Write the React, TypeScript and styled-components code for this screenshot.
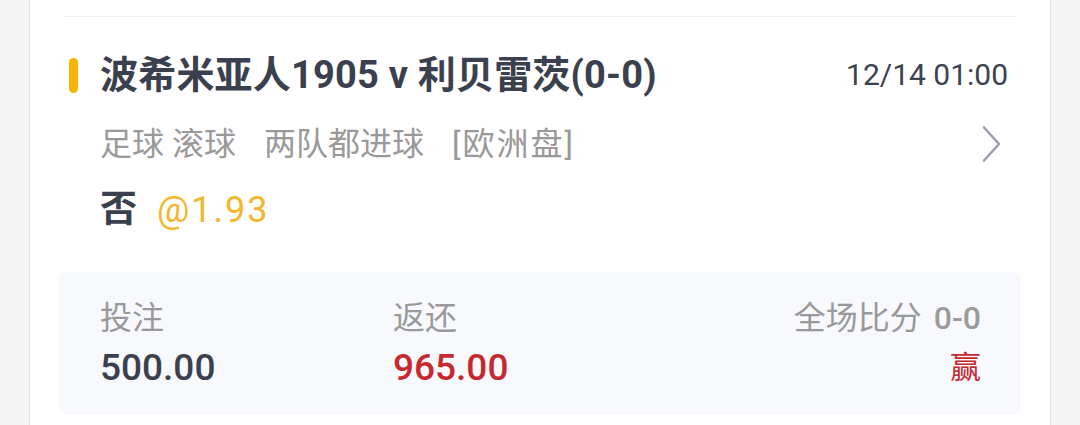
import React from "react";
import styled, { createGlobalStyle } from "styled-components";

const Global = createGlobalStyle`
  html, body { margin: 0; padding: 0; background: #f4f4f4; }
  body { font-family: "Roboto", "Noto Sans CJK SC", sans-serif; }
`;

const Page = styled.div`
  width: 1080px;
  height: 425px;
  overflow: hidden;
  padding: 0 29px;
  box-sizing: border-box;
`;

const Card = styled.div`
  height: 425px;
  background: #ffffff;
  border-left: 1px solid #e2e2e2;
  border-right: 1px solid #e2e2e2;
  box-sizing: border-box;
`;

const Divider = styled.div`
  margin: 0 33px;
  padding-top: 16px;
  border-bottom: 1px solid #f0f0f0;
`;

const Body = styled.div`
  padding: 38px 28px 0;
`;

const HeaderRow = styled.div`
  display: flex;
  align-items: center;
  justify-content: space-between;
  padding-left: 11px;
  padding-right: 14px;
  height: 40px;
`;

const TitleWrap = styled.div`
  display: flex;
  align-items: center;
`;

const Marker = styled.span`
  width: 9px;
  height: 35px;
  border-radius: 5px;
  background: #f6b500;
  margin-right: 22px;
`;

const Title = styled.span`
  font-size: 38px;
  font-weight: 700;
  color: #3b404e;
  line-height: 40px;
  letter-spacing: 0.2px;
`;

const DateText = styled.span`
  font-size: 30px;
  color: #3d4250;
  line-height: 40px;
`;

const SubRow = styled.div`
  display: flex;
  align-items: center;
  justify-content: space-between;
  margin-top: 29px;
  padding-left: 42px;
  padding-right: 20px;
  height: 40px;
`;

const SubText = styled.div`
  display: flex;
  font-size: 32px;
  color: #999999;
  line-height: 40px;
`;

const SubPart = styled.span<{ $gap?: number; $spread?: boolean }>`
  margin-left: ${(p) => p.$gap ?? 0}px;
  letter-spacing: ${(p) => (p.$spread ? "2px" : "0")};
`;

const OddsRow = styled.div`
  display: flex;
  align-items: center;
  padding-left: 42px;
  margin-top: 24px;
  height: 44px;
`;

const Pick = styled.span`
  font-size: 37px;
  font-weight: 700;
  color: #3b404e;
  line-height: 44px;
`;

const Odds = styled.span`
  font-size: 36px;
  color: #f5b62c;
  margin-left: 20px;
  line-height: 44px;
  letter-spacing: 2px;
`;

const Panel = styled.div`
  margin-top: 40px;
  height: 143px;
  background: #f8f9fc;
  border-radius: 10px;
  padding: 26px 41px 0 42px;
  box-sizing: border-box;
  display: grid;
  grid-template-columns: 293px 1fr auto;
`;

const Col = styled.div<{ $right?: boolean }>`
  display: flex;
  flex-direction: column;
  align-items: ${(p) => (p.$right ? "flex-end" : "flex-start")};
`;

const Label = styled.span`
  font-size: 32px;
  color: #999999;
  line-height: 40px;
`;

const Score = styled.span`
  font-weight: 500;
  color: #9b9b9b;
  margin-left: 12px;
`;

const Value = styled.span<{ $red?: boolean }>`
  font-size: 37px;
  font-weight: 500;
  color: ${(p) => (p.$red ? "#c5282e" : "#3b404e")};
  line-height: 46px;
  margin-top: 7px;
`;

const Result = styled.span`
  font-size: 31px;
  color: #c5282e;
  line-height: 46px;
  margin-top: 7px;
`;

const Chevron = () => (
  <svg width="20" height="36" viewBox="0 0 20 36" fill="none">
    <path d="M2 1.5 L17 18 L2 34.5" stroke="#9aa0aa" strokeWidth="2.6" strokeLinecap="round" strokeLinejoin="round" />
  </svg>
);

export default function App() {
  return (
    <>
      <Global />
      <Page>
        <Card>
          <Divider />
          <Body>
            <HeaderRow>
              <TitleWrap>
                <Marker />
                <Title>波希米亚人1905 v 利贝雷茨(0-0)</Title>
              </TitleWrap>
              <DateText>12/14 01:00</DateText>
            </HeaderRow>
            <SubRow>
              <SubText>
                <SubPart>足球</SubPart>
                <SubPart $gap={8}>滚球</SubPart>
                <SubPart $gap={28}>两队都进球</SubPart>
                <SubPart $gap={28} $spread>[欧洲盘]</SubPart>
              </SubText>
              <Chevron />
            </SubRow>
            <OddsRow>
              <Pick>否</Pick>
              <Odds>@1.93</Odds>
            </OddsRow>
            <Panel>
              <Col>
                <Label>投注</Label>
                <Value>500.00</Value>
              </Col>
              <Col>
                <Label>返还</Label>
                <Value $red>965.00</Value>
              </Col>
              <Col $right>
                <Label>
                  全场比分<Score>0-0</Score>
                </Label>
                <Result>赢</Result>
              </Col>
            </Panel>
          </Body>
        </Card>
      </Page>
    </>
  );
}
